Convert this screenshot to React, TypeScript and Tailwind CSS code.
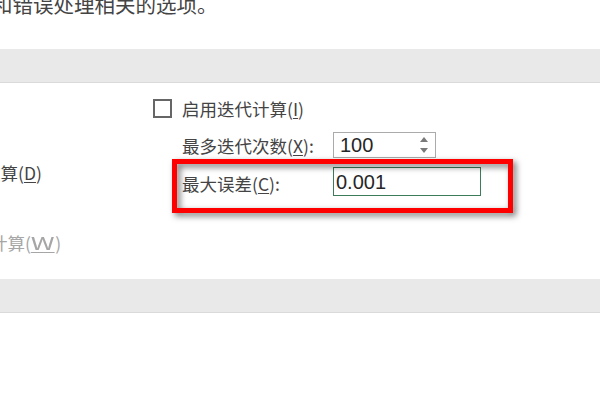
const cjk = "font-['Noto_Sans_CJK_SC','Noto_Sans',sans-serif]";

function Key({ k, wide }: { k: string; wide?: boolean }) {
  return (
    <>
      (
      <span
        className={
          wide
            ? "inline-block scale-x-[1.55] mx-[4.5px] underline underline-offset-2 decoration-1"
            : "underline underline-offset-2 decoration-1"
        }
      >
        {k}
      </span>
      )
    </>
  );
}

function SpinBox({ value }: { value: string }) {
  return (
    <div className="w-[103px] h-[26px] border border-[#ababab] bg-white flex items-center justify-between pl-[6px] pr-[7px]">
      <span className="font-['Liberation_Sans',sans-serif] text-[20px] leading-none text-[#262626]">
        {value}
      </span>
      <div className="flex flex-col items-center gap-[6px]">
        <span className="w-0 h-0 border-l-[4.5px] border-r-[4.5px] border-b-[5px] border-l-transparent border-r-transparent border-b-[#7a7a7a]" />
        <span className="w-0 h-0 border-l-[4.5px] border-r-[4.5px] border-t-[5px] border-l-transparent border-r-transparent border-t-[#7a7a7a]" />
      </div>
    </div>
  );
}

export default function App() {
  return (
    <div className={`relative w-[600px] h-[400px] overflow-hidden bg-white ${cjk}`}>
      {/* description (scrolled, clipped at top) */}
      <div className="h-[49px] flex items-start">
        <p className="-mt-[6px] -ml-[8px] whitespace-nowrap text-[20.5px] leading-[20.5px] text-[#444]">
          和错误处理相关的选项。
        </p>
      </div>

      {/* section header band */}
      <div className="h-[34px] bg-[#e9e9e9] border-b border-[#dadada]" />

      {/* calculation options */}
      <div className="h-[196px] flex text-[17.5px] leading-[17px] text-[#444]">
        <div className="w-[153px] shrink-0 pt-[81px] flex flex-col gap-[53px] whitespace-nowrap">
          <span className="-ml-[17px]">
            重算<Key k="D" />
          </span>
          <span className="-ml-[10px] text-[#a6a6a6]">
            计算<Key k="W" wide />
          </span>
        </div>

        <div className="flex flex-col pt-[15px]">
          <div className="flex items-center h-[20px]">
            <span className="w-[19px] h-[19px] border-2 border-[#666] bg-white" />
            <span className="ml-[10px]">
              启用迭代计算<Key k="I" />
            </span>
          </div>

          <div className="flex items-center mt-[14px] pl-[29px]">
            <span className="w-[151px]">
              最多迭代次数<Key k="X" />:
            </span>
            <SpinBox value="100" />
          </div>

          <div className="flex items-center mt-[9px] pl-[29px]">
            <span className="w-[151px] mt-[3px]">
              最大误差<Key k="C" />:
            </span>
            <div className="w-[148px] h-[29px] border border-[#3c7c5a] bg-white flex items-center pl-[2px]">
              <span className="font-['Liberation_Sans',sans-serif] text-[20px] leading-none text-[#262626]">
                0.001
              </span>
            </div>
          </div>
        </div>
      </div>

      {/* next section header band */}
      <div className="h-[34px] bg-[#e9e9e9] border-b border-[#dadada]" />

      {/* annotation frame */}
      <div className="absolute left-[172px] top-[159px] w-[341px] h-[54px] border-[5px] border-[#ff0000] pointer-events-none drop-shadow-[3px_3px_3px_rgba(0,0,0,0.55)]" />
    </div>
  );
}
